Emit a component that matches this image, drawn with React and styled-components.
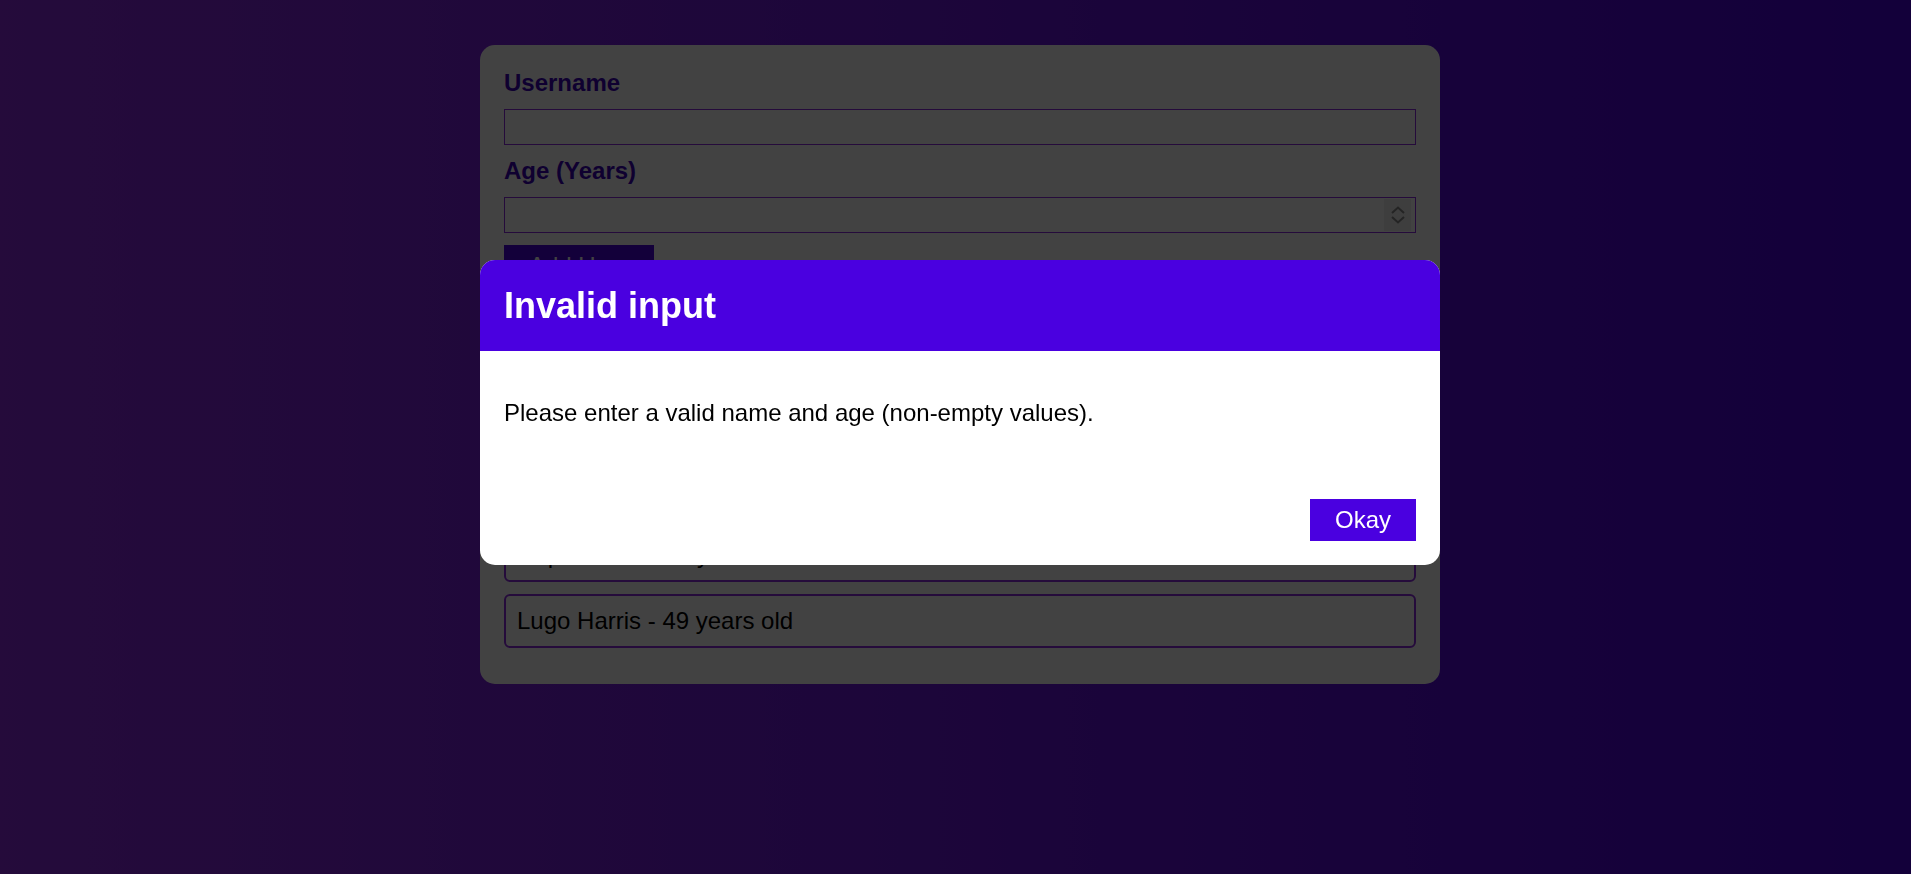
import React from "react";
import styled, { createGlobalStyle } from "styled-components";

const GlobalStyle = createGlobalStyle`
  * { box-sizing: border-box; }
  html, body {
    margin: 0;
    height: 100%;
  }
  body {
    font-family: "Liberation Sans", Arial, sans-serif;
    font-size: 24px;
    background: linear-gradient(to right, #8e2de2, #4a00e0);
    overflow: hidden;
  }
`;

const Page = styled.div`
  padding: 45px 0 0 9px;
`;

const Card = styled.div`
  background: white;
  border-radius: 15px;
  width: 960px;
  margin: 0 auto 48px;
`;

const Form = styled.form`
  padding: 24px;
`;

const Label = styled.label`
  display: block;
  font-weight: bold;
  color: #3c00b8;
  margin-bottom: 12px;
`;

const InputWrap = styled.div`
  position: relative;
  margin-bottom: 12px;
`;

const Input = styled.input`
  display: block;
  width: 100%;
  font: inherit;
  height: 36px;
  padding: 3px;
  border: 1px solid #8e2de2;
  background: white;
  outline: none;
`;

const Spinner = styled.div`
  position: absolute;
  top: 2px;
  right: 5px;
  width: 27px;
  height: 32px;
  background: #efefef;
  display: flex;
  align-items: center;
  justify-content: center;
`;

const Button = styled.button`
  font: inherit;
  border: 1px solid #4a00e0;
  background: #4a00e0;
  color: white;
  padding: 6px 24px;
  cursor: pointer;
`;

const UserList = styled.ul`
  list-style: none;
  margin: 0;
  padding: 25px 24px 24px;
`;

const UserItem = styled.li`
  border: 2px solid #8e2de2;
  border-radius: 6px;
  margin: 12px 0;
  padding: 11px 11px;
  color: black;
`;

const Backdrop = styled.div`
  position: fixed;
  inset: 0;
  background: rgba(0, 0, 0, 0.74);
  z-index: 10;
`;

const Modal = styled.div`
  position: fixed;
  top: 260px;
  left: calc(50% + 4.5px - 480px);
  width: 960px;
  background: white;
  border-radius: 15px;
  overflow: hidden;
  z-index: 100;
`;

const ModalHeader = styled.header`
  background: #4a00e0;
  padding: 24px;
`;

const Title = styled.h2`
  margin: 0;
  color: white;
  font-size: 36px;
  line-height: 43px;
`;

const ModalContent = styled.div`
  padding: 24px;
  p {
    margin: 24px 0;
  }
`;

const ModalActions = styled.footer`
  padding: 24px;
  display: flex;
  justify-content: flex-end;
`;

const users = [
  { id: 1, name: "Max Stone", age: 31 },
  { id: 2, name: "Anna Kuhn", age: 27 },
  { id: 3, name: "Hope Dales", age: 35 },
  { id: 4, name: "Lugo Harris", age: 49 },
];

const SpinIcon = () => (
  <svg width="16" height="20" viewBox="0 0 16 20" fill="none" stroke="#8a8a8a" strokeWidth="2">
    <polyline points="2,8 8,2.5 14,8" />
    <polyline points="2,12 8,17.5 14,12" />
  </svg>
);

export default function App() {
  return (
    <>
      <GlobalStyle />
      <Page>
        <Card>
          <Form onSubmit={(e) => e.preventDefault()}>
            <Label htmlFor="username">Username</Label>
            <InputWrap>
              <Input id="username" type="text" />
            </InputWrap>
            <Label htmlFor="age">Age (Years)</Label>
            <InputWrap>
              <Input id="age" type="text" />
              <Spinner>
                <SpinIcon />
              </Spinner>
            </InputWrap>
            <Button type="submit">Add User</Button>
          </Form>
        </Card>
        <Card>
          <UserList>
            {users.map((u) => (
              <UserItem key={u.id}>
                {u.name} - {u.age} years old
              </UserItem>
            ))}
          </UserList>
        </Card>
      </Page>
      <Backdrop />
      <Modal>
        <ModalHeader>
          <Title>Invalid input</Title>
        </ModalHeader>
        <ModalContent>
          <p>Please enter a valid name and age (non-empty values).</p>
        </ModalContent>
        <ModalActions>
          <Button>Okay</Button>
        </ModalActions>
      </Modal>
    </>
  );
}
